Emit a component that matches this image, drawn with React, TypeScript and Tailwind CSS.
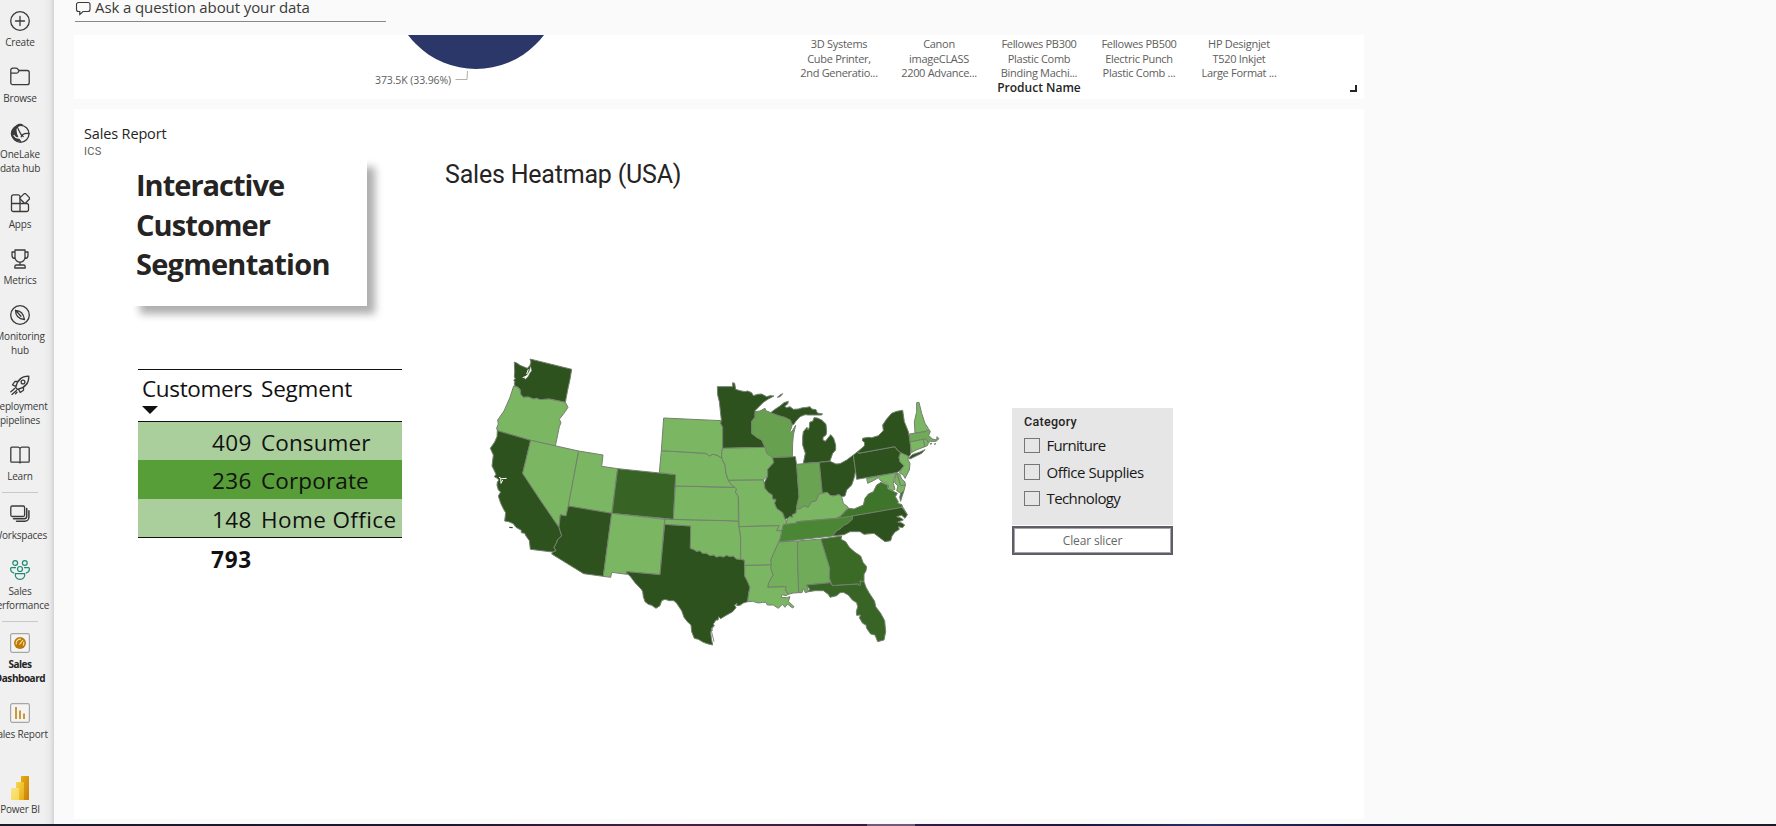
import React from "react";

const DARK = "#2e521e";
const LIGHT = "#7bb662";

const states: { id: string; fill: string; d: string }[] = [
  { id: "WA", fill: DARK, d: "M103 66L112 70L120 76L142 85L150 76L153 66L150 57L275 88L270 118L263 150L256 187L208 177L180 179L170 175L160 177L145 171L130 172L122 163L120 148L112 141L104 137L103 130L105 125L101 121L106 117L103 110L104 95Z" },
  { id: "OR", fill: LIGHT, d: "M101 138L112 141L120 148L122 163L130 172L145 171L160 177L170 175L180 179L208 177L256 187L264 202L252 220L238 238L243 248L238 260L226 318L152 301L52 272L50 264L55 252L53 240L72 213L90 172Z" },
  { id: "CA", fill: DARK, d: "M52 272L152 301L128 400L181 480L237 562L245 587L232 600L230 608L222 622L228 632L217 636L151 628L148 602L138 588L134 580L124 578L124 571L108 562L100 551L86 545L74 543L77 518L72 510L64 494L58 478L55 468L62 456L55 450L51 436L52 426L57 420L50 414L43 410L48 403L42 390L36 378L40 345L31 325L44 306L51 290Z" },
  { id: "NV", fill: LIGHT, d: "M152 301L296 333L265 498L258 528L241 524L237 562L181 480L128 400Z" },
  { id: "UT", fill: LIGHT, d: "M296 333L369 345L365 379L413 386L395 520L265 498Z" },
  { id: "CO", fill: "#376325", d: "M413 386L587 404L580 538L396 520Z" },
  { id: "AZ", fill: DARK, d: "M265 498L395 520L370 709L311 701L215 642L219 636L228 632L222 622L230 608L232 600L245 587L237 562L241 524L258 528Z" },
  { id: "NM", fill: LIGHT, d: "M395 520L554 538L540 704L440 695L441 703L395 697L392 712L370 709Z" },
  { id: "TX", fill: DARK, d: "M554 553L632 558L631 625L640 628L650 634L660 632L668 640L680 640L690 647L700 645L710 651L720 648L730 651L740 646L750 650L760 648L770 657L782 658L793 660L794 708L803 725L810 742L806 760L803 785L790 789L780 796L770 797L771 790L764 795L768 803L758 815L735 828L722 836L716 830L714 840L708 840L700 852L703 858L694 865L697 872L692 875L694 895L698 915L685 912L670 907L655 898L643 895L635 875L633 855L622 845L612 832L605 812L600 805L590 790L582 782L568 782L555 778L545 782L540 797L528 805L515 796L505 793L495 785L490 770L488 755L484 748L465 728L450 708L440 700L440 695L540 704Z" },
  { id: "OK", fill: LIGHT, d: "M554 538L720 541L775 543L782 590L782 658L770 657L760 648L750 650L740 646L730 651L720 648L710 651L700 645L690 647L680 640L668 640L660 632L650 634L640 628L631 625L632 558L554 553Z" },
  { id: "KS", fill: LIGHT, d: "M586 438L765 442L770 448L766 456L775 470L775 543L580 538Z" },
  { id: "NE", fill: LIGHT, d: "M544 332L660 339L678 340L688 348L698 343L710 345L725 354L735 375L738 400L745 421L755 435L765 442L586 438L587 404L538 398Z" },
  { id: "SD", fill: LIGHT, d: "M551 234L725 242L722 250L728 262L728 325L725 335L725 354L710 345L698 343L688 348L678 340L660 339L544 332Z" },
  { id: "MN", fill: DARK, d: "M712 140L758 140L758 128L764 130L767 148L780 152L795 155L803 153L815 158L820 167L833 163L845 162L860 170L870 167L882 168L865 177L850 187L825 212L825 232L815 244L815 280L830 292L845 300L855 322L728 325L728 262L722 250L724 240L718 185L713 165Z" },
  { id: "WI", fill: "#67a04f", d: "M825 215L840 213L855 205L858 212L872 218L900 228L922 233L932 241L937 254L932 270L928 278L936 274L947 256L940 285L938 310L937 350L878 353L860 340L855 322L845 300L830 292L815 280L815 244L825 232Z" },
  { id: "MI-UP", fill: DARK, d: "M872 218L885 208L900 198L912 188L925 184L923 192L914 199L920 203L930 200L940 208L955 207L968 203L975 203L990 200L995 207L1008 209L1012 219L1028 222L1024 225L1005 225L985 225L975 224L960 230L948 243L940 255L934 249L932 241L915 232L900 228Z" },
  { id: "Isle", fill: DARK, d: "M892 172L900 165L908 161L900 170Z" },
  { id: "MI", fill: DARK, d: "M970 370L976 340L968 315L968 290L970 275L981 262L984 270L988 262L989 247L999 243L1002 233L1012 234L1025 240L1038 253L1040 275L1038 285L1029 292L1029 300L1036 304L1052 284L1061 295L1067 315L1067 330L1058 340L1050 363L1018 367Z" },
  { id: "IA", fill: LIGHT, d: "M728 325L855 322L860 340L878 353L881 368L863 388L863 408L850 420L745 421L738 400L735 375L725 354L725 335Z" },
  { id: "MO", fill: LIGHT, d: "M745 421L850 420L855 445L865 457L877 465L878 477L888 478L884 490L890 505L908 518L915 537L920 545L918 554L910 558L905 572L890 572L897 557L777 560L775 470L766 456L770 448L765 442L755 435Z" },
  { id: "IL", fill: DARK, d: "M878 353L946 350L950 375L957 470L950 500L948 520L937 524L938 532L928 530L922 536L915 537L908 518L890 505L884 490L888 478L878 477L877 465L865 457L855 445L853 428L863 408L863 388L881 368Z" },
  { id: "IN", fill: "#6aa453", d: "M950 373L1018 367L1027 460L1017 462L1008 483L994 486L985 502L972 498L960 507L950 506L950 500L957 470Z" },
  { id: "OH", fill: DARK, d: "M1018 367L1050 364L1068 372L1080 371L1100 360L1120 345L1127 390L1122 415L1115 435L1100 450L1095 468L1085 470L1077 464L1060 468L1050 466L1042 457L1027 460Z" },
  { id: "KY", fill: LIGHT, d: "M1027 460L1042 457L1050 466L1060 468L1077 464L1085 470L1090 490L1105 502L1080 530L1070 535L950 545L950 549L918 554L922 536L928 530L938 532L937 524L948 520L950 506L960 507L972 498L985 502L994 486L1008 483L1017 462Z" },
  { id: "TN", fill: "#4b8635", d: "M910 554L950 549L950 545L1070 535L1118 528L1117 538L1104 550L1092 556L1080 567L1070 572L1058 588L896 606L902 590L905 575Z" },
  { id: "VA", fill: "#3f752a", d: "M1070 535L1080 530L1105 505L1122 507L1150 495L1155 475L1165 462L1180 455L1190 435L1203 427L1222 435L1224 447L1240 454L1252 460L1246 470L1255 485L1253 490L1266 494L1266 503L1118 528Z" },
  { id: "NC", fill: DARK, d: "M1118 528L1266 502L1276 515L1282 524L1275 535L1265 526L1250 530L1265 535L1270 540L1253 546L1266 549L1274 555L1268 563L1255 560L1258 568L1245 576L1236 588L1232 602L1215 605L1182 580L1152 583L1140 575L1110 575L1092 584L1058 588L1070 572L1080 567L1092 556L1104 550L1117 538Z" },
  { id: "GA", fill: "#3a6a26", d: "M1022 597L1085 588L1083 598L1097 605L1108 622L1125 637L1142 648L1149 667L1160 680L1158 692L1152 703L1152 725L1140 723L1142 733L1138 738L1135 732L1057 737L1048 715L1049 685Z" },
  { id: "AL", fill: "#6fab58", d: "M952 603L1022 597L1049 685L1048 715L1052 728L980 735L986 755L976 758L970 745L966 758L956 758L953 690Z" },
  { id: "MS", fill: "#74b05c", d: "M896 606L952 603L953 690L956 758L940 759L925 763L916 750L918 740L863 742L866 728L879 705L872 685L872 660L885 630Z" },
  { id: "LA", fill: LIGHT, d: "M794 676L874 674L872 685L879 705L866 728L863 742L918 740L916 750L925 763L919 767L906 764L904 772L920 773L930 770L925 784L942 800L938 804L922 792L915 802L907 793L895 805L880 795L862 795L858 787L848 787L835 789L818 784L803 785L806 760L810 742L803 725L794 708Z" },
  { id: "AR", fill: LIGHT, d: "M777 560L897 557L890 572L905 572L900 597L885 630L872 660L874 674L794 676L793 660L782 658L782 590Z" },
  { id: "FL", fill: "#386526", d: "M980 735L1052 728L1057 737L1135 732L1138 738L1142 733L1140 723L1152 725L1158 742L1167 758L1184 784L1187 800L1202 820L1214 842L1217 875L1212 900L1193 905L1185 885L1172 882L1160 865L1158 855L1148 850L1138 833L1142 825L1130 826L1129 815L1133 800L1130 788L1117 780L1105 765L1090 757L1080 758L1070 767L1050 772L1045 763L1030 752L1005 752L985 755L989 748Z" },
  { id: "PA", fill: DARK, d: "M1120 345L1133 335L1135 340L1245 320L1252 330L1262 338L1257 352L1260 365L1272 377L1260 392L1250 398L1130 418Z" },
  { id: "NY", fill: DARK, d: "M1133 335L1153 318L1154 308L1147 302L1148 295L1165 292L1175 293L1195 287L1210 272L1208 255L1220 237L1235 220L1250 214L1268 211L1273 245L1285 275L1292 312L1292 343L1285 352L1262 338L1252 330L1245 320L1135 340Z" },
  { id: "LI", fill: DARK, d: "M1286 355L1297 344L1320 336L1335 329L1325 340L1308 348L1290 357Z" },
  { id: "NH", fill: LIGHT, d: "M1310 188L1317 187L1325 220L1335 250L1345 265L1335 275L1305 279L1303 245L1310 215Z" },
  { id: "MA", fill: "#6fab58", d: "M1288 282L1335 275L1347 268L1351 275L1346 286L1357 297L1370 300L1371 290L1377 296L1368 304L1352 304L1345 308L1338 297L1330 298L1290 306Z" },
  { id: "CT", fill: LIGHT, d: "M1290 306L1330 298L1335 320L1308 330L1294 338Z" },
  { id: "RI", fill: LIGHT, d: "M1330 298L1338 297L1345 308L1343 316L1335 320Z" },
  { id: "NJ", fill: LIGHT, d: "M1262 338L1285 348L1284 360L1290 370L1288 390L1275 415L1270 405L1258 398L1272 377L1260 365L1257 352Z" },
  { id: "MD", fill: LIGHT, d: "M1160 415L1250 398L1242 414L1240 430L1245 448L1236 452L1225 444L1226 435L1218 430L1203 423L1195 413L1180 422L1163 430Z" },
  { id: "MD-E", fill: LIGHT, d: "M1250 400L1262 437L1276 435L1272 452L1262 460L1250 452L1254 438L1244 428L1245 412Z" },
  { id: "DE", fill: LIGHT, d: "M1252 400L1259 402L1265 417L1275 426L1276 435L1262 437Z" },
  { id: "VA-E", fill: "#3f752a", d: "M1262 460L1272 452L1266 470L1262 484L1259 472Z" },
];

function UsMap() {
  return (
    <svg viewBox="0 0 1380 960" className="block h-[320px] w-[460px]">
      <g stroke="#74806f" strokeWidth="3" strokeLinejoin="round">
        {states.map((s) => (
          <path key={s.id} d={s.d} fill={s.fill} />
        ))}
      </g>
      <path d="M152 78L148 92L142 103L132 113L136 118L145 109L149 100L155 92Z" fill="#fff" stroke="#74806f" strokeWidth="1.5" />
      <path d="M140 102L145 88M128 113L140 108" stroke="#fff" strokeWidth="3" />
      <path d="M57 412L65 416L80 415M62 415L63 430L68 420" stroke="#fff" strokeWidth="3" fill="none" />
      <path d="M701 857L694 872L702 905" stroke="#8b8f89" strokeWidth="3" fill="none" />
      <path d="M88 562L98 563" stroke={DARK} strokeWidth="4" />
      <path d="M1350 312L1356 310M1362 313L1368 311" stroke="#74806f" strokeWidth="4" />
      <path d="M1266 497L1282 524" stroke="#74806f" strokeWidth="3" />
    </svg>
  );
}

function Svg({ children }: { children: React.ReactNode }) {
  return (
    <svg viewBox="0 0 20 20" className="block size-5 shrink-0" fill="none" stroke="#3b3a39" strokeWidth="1.3" strokeLinejoin="round" strokeLinecap="round">
      {children}
    </svg>
  );
}

const icons = {
  create: <Svg><circle cx="10" cy="10" r="9.3" /><path d="M10 5.5v9M5.5 10h9" /></Svg>,
  browse: <Svg><path d="M.8 4.5v11.2a2 2 0 0 0 2 2h14.400a2 2 0 0 0 2-2V5.500a2 2 0 0 0-2-2H9L7.300 1.600A2 2 0 0 0 6 1.200H2.800a2 2 0 0 0-2 2zM.8 6.200h5.700c.6 0 1-.2 1.400-.6L9.300 3.500" /></Svg>,
  onelake: (
    <Svg>
      <path d="M6 2.500C8 .2 12 .2 14 2.300C10.500 2 8 3.500 6.500 6C6.300 10 7.500 14 11 18.500C5.500 18.500.8 15.500.8 10.500C.8 7 3 4.500 6 2.500Z" fill="#3b3a39" stroke="none" />
      <circle cx="10.500" cy="10.800" r="8.500" />
      <path d="M5.500 4.500c-.5 4 .5 9 5 14M7.200 4c2 3 2.500 7.500 6 9.500M11 14.500c.8-4 4-4.500 8-4" />
      <path d="M4 12.500c1.500 2.500 4 3 7 2" stroke="#f0f0f0" />
    </Svg>
  ),
  apps: <Svg><path d="M10 10.500V3.700a1.800 1.800 0 0 0-1.800-1.800H3.300a1.800 1.800 0 0 0-1.800 1.800v13a1.800 1.800 0 0 0 1.800 1.800h13.400a1.800 1.800 0 0 0 1.800-1.800v-4.400a1.800 1.800 0 0 0-1.800-1.800H1.500M10 10.500v8" /><path d="M14 .9l-3.600 3.500a1.300 1.300 0 0 0 0 1.800L14 9.700a1.300 1.300 0 0 0 1.800 0l3.400-3.500a1.300 1.300 0 0 0 0-1.800L15.800.9a1.300 1.300 0 0 0-1.800 0z" fill="#f0f0f0" /></Svg>,
  metrics: <Svg><path d="M5 1h10v7.200a5 5 0 0 1-10 0zM5 3H2v3.500C2 8.500 3.300 9.500 5.200 9.500M15 3h3v3.500c0 2-1.300 3-3.200 3M10 13.200V16M4.800 19v-1.200A1.800 1.800 0 0 1 6.600 16h6.800a1.800 1.800 0 0 1 1.800 1.800V19z" /></Svg>,
  monitoring: <Svg><circle cx="10" cy="10" r="9.300" /><path d="M5.500 5.300c4.500.2 8 2.700 9 9.200c-5.500-.5-9-3.500-9-9.200zM5.500 5.300l5.500 6" /></Svg>,
  deploy: <Svg><path d="M7.300 14.300L5.700 12.700C7 6 11 1 18.800 1.200C19 9 14 13 7.300 14.300ZM7.500 6.500H4.800L2.500 9.800L5.800 11.500M13.500 12.500v2.700l-3.300 2.300l-1.700-3.300" /><circle cx="13" cy="7" r="1.900" /><path d="M4.500 13.500L2.500 15.500M6.500 15.500L2 19.500M.8 16.800L2 15.800M5.500 18.700L7 17.200" /></Svg>,
  learn: <Svg><path d="M10 3.500C9.500 2.600 9 2.200 8 2.200H1.700a.9.900 0 0 0-.9.900v13.200a.9.900 0 0 0 .9.900H8.500c.8 0 1.200.2 1.500.6c.3-.4.700-.6 1.500-.6h6.800a.9.900 0 0 0 .9-.9V3.100a.9.900 0 0 0-.9-.9H12c-1 0-1.500.4-2 1.300zM10 3.500v14" /></Svg>,
  workspaces: <Svg><rect x=".8" y="2" width="13.800" height="10.500" rx="1.500" /><path d="M16.700 4.500v7.800a2.500 2.500 0 0 1-2.500 2.500H3.500M18.900 6.800v6.400a4 4 0 0 1-4 4H6.500" strokeWidth="1.500" /></Svg>,
  people: (
    <svg viewBox="0 0 20 20" className="block size-5 shrink-0" fill="none" stroke="#1d8a74" strokeWidth="1.200" strokeLinejoin="round">
      <circle cx="5.200" cy="3" r="2.400" /><circle cx="14.800" cy="3" r="2.400" /><circle cx="10" cy="9" r="2.500" />
      <path d="M6 7.700H1.500a.9.900 0 0 0-.9.900c0 2.700 1.400 4.200 3.700 4.500M14 7.700h4.500a.9.900 0 0 1 .9.900c0 2.700-1.400 4.200-3.700 4.500M5.400 13.700h9.200c.7 3.500-1.700 5.700-4.600 5.700s-5.300-2.200-4.600-5.700z" />
    </svg>
  ),
  dashboard: (
    <svg viewBox="0 0 20 20" className="block size-5 shrink-0">
      <rect x=".6" y=".6" width="18.800" height="18.800" rx="1.800" fill="#f4f4f4" stroke="#a6a6a6" strokeWidth="1.200" />
      <circle cx="10" cy="10" r="6" fill="#bd7a0c" />
      <path d="M6.300 11.500A4 4 0 0 1 11 6.300M13.700 9a4 4 0 0 1-.7 3.500M9.500 11.500L13 7" stroke="#ffe9a8" strokeWidth="1.100" fill="none" />
    </svg>
  ),
  report: (
    <svg viewBox="0 0 20 20" className="block size-5 shrink-0">
      <rect x=".6" y=".6" width="18.800" height="18.800" rx="1.800" fill="#f4f4f4" stroke="#a6a6a6" strokeWidth="1.200" />
      <path d="M6 4v12M10 7.500V16M14 10.500V16" stroke="#c8871a" strokeWidth="1.700" />
    </svg>
  ),
};

function NavItem({ icon, lines, bold }: { icon: React.ReactNode; lines: string[]; bold?: boolean }) {
  return (
    <div className={"flex flex-col items-center pt-[11px] pb-[7px] " + (bold ? "font-bold tracking-[-0.45px] text-[#242424]" : "")}>
      {icon}
      <div className="mt-[4px] text-center text-[10px] leading-[14px] whitespace-nowrap">
        {lines.map((l) => (
          <div key={l}>{l}</div>
        ))}
      </div>
    </div>
  );
}

function NavDivider() {
  return <div className="mx-auto flex h-[3px] w-9 shrink-0 items-end"><div className="h-px w-full bg-[#c8c8c8]" /></div>;
}

const products = [
  ["3D Systems", "Cube Printer,", "2nd Generatio..."],
  ["Canon", "imageCLASS", "2200 Advance..."],
  ["Fellowes PB300", "Plastic Comb", "Binding Machi..."],
  ["Fellowes PB500", "Electric Punch", "Plastic Comb ..."],
  ["HP Designjet", "T520 Inkjet", "Large Format ..."],
];

const rows = [
  { n: 409, s: "Consumer", c: "h-[38px] bg-[#abcf9c]", t: "tracking-[0.1px]" },
  { n: 236, s: "Corporate", c: "h-[39px] bg-[#579d38]", t: "tracking-[0.15px]" },
  { n: 148, s: "Home Office", c: "h-[38px] bg-[#abcf9c]", t: "tracking-[0.4px]" },
];

const categories = [
  { name: "Furniture", c: "tracking-[-0.7px]" },
  { name: "Office Supplies", c: "tracking-[-0.45px]" },
  { name: "Technology", c: "tracking-[-0.6px]" },
];

export default function App() {
  return (
    <div className="flex h-[826px] w-[1776px] flex-col overflow-hidden bg-[#fafafa] font-['Open_Sans','Noto_Sans',sans-serif] text-[#252423]">
      <div className="flex h-[824px] shrink-0">
        <nav className="h-full w-[54px] shrink-0 overflow-hidden bg-[linear-gradient(to_right,#f0f0f0_44px,#e9e9e9_50px,#dadada_53px,#d2d2d2_54px)] text-[#3b3a39]">
          <div className="-ml-5 flex h-full w-20 flex-col tracking-[-0.2px]">
            <NavItem icon={icons.create} lines={["Create"]} />
            <NavItem icon={icons.browse} lines={["Browse"]} />
            <NavItem icon={icons.onelake} lines={["OneLake", "data hub"]} />
            <NavItem icon={icons.apps} lines={["Apps"]} />
            <NavItem icon={icons.metrics} lines={["Metrics"]} />
            <NavItem icon={icons.monitoring} lines={["Monitoring", "hub"]} />
            <NavItem icon={icons.deploy} lines={["Deployment", "pipelines"]} />
            <NavItem icon={icons.learn} lines={["Learn"]} />
            <NavDivider />
            <NavItem icon={icons.workspaces} lines={["Workspaces"]} />
            <NavItem icon={icons.people} lines={["Sales", "Performance"]} />
            <NavDivider />
            <NavItem icon={icons.dashboard} lines={["Sales", "Dashboard"]} bold />
            <NavItem icon={icons.report} lines={["Sales Report"]} />
            <div className="mt-[28px] flex flex-col items-center text-[10px] leading-[14px]">
              <svg viewBox="0 0 18 24" className="h-6 w-[18px]">
                <defs>
                  <linearGradient id="b1" x2="1" y2="1"><stop stopColor="#e6ad10" /><stop offset="1" stopColor="#c87e0e" /></linearGradient>
                  <linearGradient id="b2" x2="1" y2="1"><stop stopColor="#f6d751" /><stop offset="1" stopColor="#e6ad10" /></linearGradient>
                  <linearGradient id="b3" x2="1" y2="1"><stop stopColor="#f9e589" /><stop offset="1" stopColor="#f6d751" /></linearGradient>
                </defs>
                <rect x="10" width="8" height="24" rx=".6" fill="url(#b1)" />
                <rect x="5" y="6" width="8" height="18" rx=".6" fill="url(#b2)" />
                <rect y="12" width="8" height="12" rx=".6" fill="url(#b3)" />
              </svg>
              <div className="mt-[2px]">Power BI</div>
            </div>
          </div>
        </nav>

        <main className="flex flex-col pl-5">
          <div className="ml-px flex h-[22px] w-[311px] shrink-0 gap-[4px] border-b border-[#8a8886] text-[#3b3a39]">
            <svg viewBox="0 0 16 16" className="h-4 w-4" fill="none" stroke="#3b3a39" strokeWidth="1.1">
              <path d="M3.500 2.500h9.500a2 2 0 0 1 2 2v5a2 2 0 0 1-2 2H8L4.800 14.500V11.500H3.500a2 2 0 0 1-2-2v-5a2 2 0 0 1 2-2z" />
            </svg>
            <div className="-mt-px text-[15px] leading-[16px] tracking-[-0.1px] whitespace-nowrap">Ask a question about your data</div>
          </div>

          <section className="mt-[13px] flex h-[64px] w-[1290px] shrink-0 overflow-hidden bg-white">
            <div className="flex w-[715px] shrink-0">
              <div className="mt-[37px] ml-[301px] w-[77px] shrink-0 text-[10.500px] leading-4 tracking-[-0.1px] whitespace-nowrap text-[#605e5c]">373.5K (33.96%)</div>
              <svg viewBox="381 35 190 64" className="-ml-[71px] h-16 w-[190px] shrink-0">
                <circle cx="476" cy="-16" r="85" fill="#2b3769" />
                <path d="M455.500 79.500H467L467.500 71" fill="none" stroke="#b3b0ad" />
              </svg>
            </div>
            <div className="flex w-[500px] shrink-0 flex-col items-center">
              <div className="mt-[2px] flex text-[11px] leading-[14.500px] tracking-[-0.3px] text-[#605e5c]">
                {products.map((p) => (
                  <div key={p[0]} className="w-[100px] text-center whitespace-nowrap">
                    {p.map((l) => (
                      <div key={l}>{l}</div>
                    ))}
                  </div>
                ))}
              </div>
              <div className="text-[12px] leading-[14px] font-semibold">Product Name</div>
            </div>
            <div className="mt-[50px] ml-[61px] h-[7px] w-[7px] border-r-2 border-b-2 border-[#252423]" />
          </section>

          <section className="mt-[10px] flex h-[710px] w-[1290px] shrink-0 flex-col bg-white">
            <div className="h-[50px] pt-[16px] pl-[10px]">
              <div className="text-[14.500px] leading-[18px] tracking-[-0.15px]">Sales Report</div>
              <div className="font-['Roboto',sans-serif] text-[11px] leading-[18px] tracking-[0.3px] text-[#605e5c]">ICS</div>
            </div>
            <div className="flex">
              <div className="w-[371px] shrink-0">
                <div className="ml-[58px] h-[163px] w-[254px] overflow-hidden">
                  <div className="h-[147px] w-[235px] bg-white pt-[6px] pl-[4px] text-[29px] leading-[39.600px] font-bold shadow-[8px_8px_8px_rgba(0,0,0,0.32)]">
                    <div className="tracking-[-1px]">Interactive</div>
                    <div className="tracking-[-0.9px]">Customer</div>
                    <div className="tracking-[-0.75px]">Segmentation</div>
                  </div>
                </div>
                <div className="mt-[47px] ml-[64px] w-[264px] border-t border-[#111] text-[22.500px] text-[#111]">
                  <div className="flex h-[52px] gap-[9px] border-b border-[#111] pl-[4px]">
                    <div className="w-[110px]">
                      <div className="mt-px leading-[36px] tracking-[-0.35px]">Customers</div>
                      <svg viewBox="0 0 16 8" className="-mt-px block h-2 w-4"><path d="M0 0h16L8 8z" fill="#111" /></svg>
                    </div>
                    <div className="mt-px leading-[36px] tracking-[-0.2px]">Segment</div>
                  </div>
                  {rows.map((r) => (
                    <div key={r.s} className={"flex items-center gap-[9px] pl-[4px] whitespace-nowrap " + r.c}>
                      <div className="w-[110px] pt-[3px] text-right tracking-[0.5px]">{r.n}</div>
                      <div className={"pt-[3px] " + r.t}>{r.s}</div>
                    </div>
                  ))}
                  <div className="flex h-[44px] items-center border-t border-[#111] pl-[4px] font-bold">
                    <div className="w-[110px] text-right tracking-[0.8px]">793</div>
                  </div>
                </div>
              </div>
              <div className="w-[567px] shrink-0">
                <div className="h-[181px] pt-px font-['Roboto',sans-serif] text-[25px] leading-[30px] tracking-[-0.2px]">Sales Heatmap (USA)</div>
                <div className="ml-[35px]"><UsMap /></div>
              </div>
              <div className="mt-[249px] w-[161px] shrink-0">
                <div className="h-[117px] bg-[#e6e6e6] pt-[6px] pl-[12px]">
                  <div className="font-['Roboto',sans-serif] text-[12.500px] leading-[16px] font-medium tracking-[0.3px]">Category</div>
                  <div className="mt-[2px] flex flex-col">
                    {categories.map((k) => (
                      <div key={k.name} className="flex h-[26.500px] items-center gap-[7px]">
                        <div className="size-[15.500px] border border-[#767676]" />
                        <div className={"text-[15px] whitespace-nowrap text-[#1a1a1a] " + k.c}>{k.name}</div>
                      </div>
                    ))}
                  </div>
                </div>
                <div className="mt-px flex h-[29px] items-center justify-center border-2 border-[#5f5e66] bg-white pt-px text-[12px] tracking-[-0.15px] text-[#666] ring-1 ring-[#a5a4aa] ring-inset">Clear slicer</div>
              </div>
            </div>
          </section>
        </main>
      </div>
      <div className="h-[2px] shrink-0 bg-[linear-gradient(to_right,#1b1b28_0%,#1d1630_25%,#4a2040_38%,#3a1a40_48.800%,#73587a_48.800%,#73587a_51.500%,#351a48_51.500%,#1d1640_61%,#2a3060_68%,#1c1640_76%,#1b1b28_100%)]" />
    </div>
  );
}
